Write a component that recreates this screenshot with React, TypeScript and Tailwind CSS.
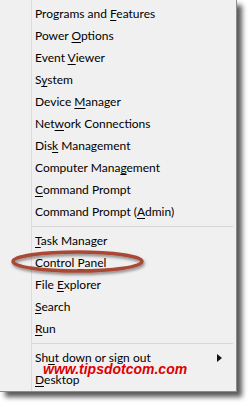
import React from "react";

type Item = { pre: string; key: string; post: string };

const group1: Item[] = [
  { pre: "Programs and ", key: "F", post: "eatures" },
  { pre: "Power ", key: "O", post: "ptions" },
  { pre: "Event ", key: "V", post: "iewer" },
  { pre: "S", key: "y", post: "stem" },
  { pre: "Device ", key: "M", post: "anager" },
  { pre: "Net", key: "w", post: "ork Connections" },
  { pre: "Dis", key: "k", post: " Management" },
  { pre: "Computer Mana", key: "g", post: "ement" },
  { pre: "", key: "C", post: "ommand Prompt" },
  { pre: "Command Prompt (", key: "A", post: "dmin)" },
];

const group2: Item[] = [
  { pre: "", key: "T", post: "ask Manager" },
  { pre: "Control ", key: "P", post: "anel" },
  { pre: "File ", key: "E", post: "xplorer" },
  { pre: "", key: "S", post: "earch" },
  { pre: "", key: "R", post: "un" },
];

function Row({ item, arrow }: { item: Item; arrow?: boolean }) {
  return (
    <div className="h-[22px] flex items-center pl-[35px] pr-[14px] text-[12px] text-black leading-none whitespace-nowrap">
      <span className="flex-1">
        {item.pre}
        <span className="underline underline-offset-[2px] decoration-1">{item.key}</span>
        {item.post}
      </span>
      {arrow && (
        <svg width="5" height="8" viewBox="0 0 5 8">
          <path d="M0 0 L5 4 L0 8 Z" fill="#111" />
        </svg>
      )}
    </div>
  );
}

function Sep() {
  return (
    <div className="h-[7px] flex items-center pl-[31px] pr-[3px]">
      <div className="h-px w-full bg-[#d7d7d7]" />
    </div>
  );
}

export default function App() {
  return (
    <div
      className="relative w-[252px] h-[409px] bg-white overflow-hidden"
      style={{ fontFamily: 'Lato, "Noto Sans", sans-serif' }}
    >
      <div className="relative w-[237px] h-[392px] bg-[#f0f0f0] border-r border-b border-[#8c8c8c] shadow-[5px_5px_5px_rgba(0,0,0,0.65)] pt-[3px]">
        <div className="absolute left-[31px] top-0 bottom-0 w-px bg-[#dcdcdc]" />
        <div className="relative flex flex-col">
          {group1.map((it) => (
            <Row key={it.pre + it.key} item={it} />
          ))}
          <Sep />
          {group2.map((it) => (
            <Row key={it.pre + it.key} item={it} />
          ))}
          <Sep />
          <Row item={{ pre: "Sh", key: "u", post: "t down or sign out" }} arrow />
          <Row item={{ pre: "", key: "D", post: "esktop" }} />
        </div>
      </div>
      <svg
        className="absolute left-0 top-0 pointer-events-none"
        width="252"
        height="409"
        viewBox="0 0 252 409"
      >
        <defs>
          <filter id="sh" x="-20%" y="-50%" width="140%" height="200%">
            <feDropShadow dx="1" dy="2" stdDeviation="1.5" floodColor="#000" floodOpacity="0.45" />
          </filter>
        </defs>
        <ellipse
          cx="77.5"
          cy="261.5"
          rx="64.5"
          ry="9.5"
          fill="none"
          stroke="#a94835"
          strokeWidth="3.4"
          filter="url(#sh)"
        />
      </svg>
      <div
        className="absolute left-[43px] top-[360px] text-[14px] font-bold italic text-[#dd0000] leading-[18px]"
        style={{ fontFamily: '"Liberation Sans", Arial, sans-serif' }}
      >
        www.tipsdotcom.com
      </div>
    </div>
  );
}
